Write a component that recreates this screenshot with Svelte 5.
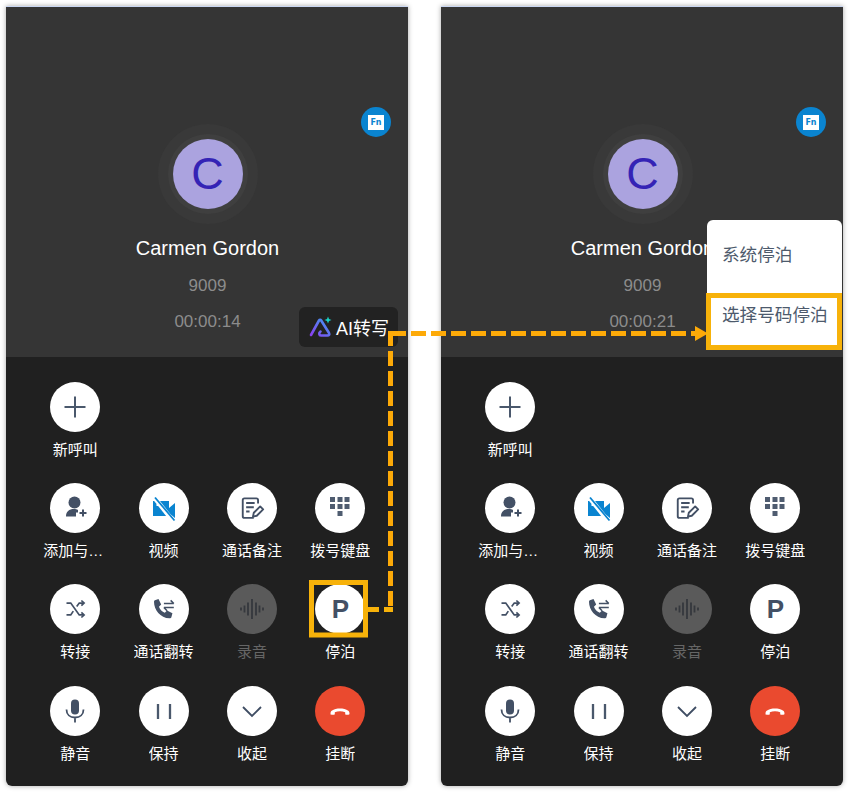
<script>
	// action rows, the same on both phones
	const rows = [
		[{ id: "plus", label: "新呼叫" }],
		[
			{ id: "addUser", label: "添加与通话者" },
			{ id: "video", label: "视频" },
			{ id: "note", label: "通话备注" },
			{ id: "dialpad", label: "拨号键盘" }
		],
		[
			{ id: "shuffle", label: "转接" },
			{ id: "flip", label: "通话翻转" },
			{ id: "wave", label: "录音", off: true },
			{ id: "park", label: "停泊" }
		],
		[
			{ id: "mic", label: "静音" },
			{ id: "pause", label: "保持" },
			{ id: "down", label: "收起" },
			{ id: "hangup", label: "挂断", red: true }
		]
	];

	const phones = [
		{ time: "00:00:14", ai: true, menu: false },
		{ time: "00:00:21", ai: false, menu: true }
	];
</script>

{#snippet icon(id)}
	{#if id === "park"}
		<span class="park">P</span>
	{:else}
		<svg width="32" height="32" viewBox="0 0 32 32" fill="none" stroke="#435065" stroke-width="1.6">
			{#if id === "plus"}
				<path d="M16 5.500v21M5.500 16h21" stroke="#4a586c" stroke-width="2" />
			{:else if id === "addUser"}
				<circle cx="15.500" cy="10.500" r="6" fill="#435065" stroke="none" />
				<path d="M7 24.500c0-5 3-7.500 8-7.500 1.500 0 3 .3 4 .9v2.600h-2v4z" fill="#435065" stroke="none" />
				<path d="M24 17.500v7M20.500 21h7" stroke-width="2" />
			{:else if id === "video"}
				<path d="M5 9h16v7l6-5v15l-6-5v3H5z" fill="#0a84d0" stroke="none" />
				<path d="M5.500 4.500L25 29" stroke="#fff" stroke-width="4.500" />
				<path d="M7 5.500l19.500 23" stroke="#0a84d0" stroke-width="1.800" />
				<rect x="8.500" y="12" width="2" height="2" fill="#fff" stroke="none" />
			{:else if id === "note"}
				<g transform="translate(2.500 2.500) scale(.85)">
					<path d="M23 10.500V6.500a2 2 0 0 0-2-2H7a2 2 0 0 0-2 2v19a2 2 0 0 0 2 2h11" stroke-width="2.200" />
					<path d="M9 10h10M9 15h9M9 20h4" stroke-width="2.200" />
					<path d="M17 26l1-4.500 7.500-7.500 3.500 3.500-7.500 7.500z" stroke-width="2.200" stroke-linejoin="round" />
				</g>
			{:else if id === "dialpad"}
				<g fill="#4f5c70" stroke="none">
					<rect x="6" y="5" width="5" height="5" /><rect x="13.500" y="5" width="5" height="5" /><rect x="20.500" y="5" width="5" height="5" />
					<rect x="6" y="12" width="5" height="5" /><rect x="13.500" y="12" width="5" height="5" /><rect x="20.500" y="12" width="5" height="5" />
					<rect x="13.500" y="19" width="5" height="5" />
				</g>
			{:else if id === "shuffle"}
				<g transform="translate(2.400 2.400) scale(.85)">
					<path d="M6 9h5l10 14h5M6 23h5l3-4.500M18 13l3-4h5" stroke-width="2" />
					<path d="M23.500 6l3.200 3-3.200 3M23.500 20l3.200 3-3.200 3" stroke-width="2" />
				</g>
			{:else if id === "flip"}
				<g transform="translate(1.500 1.500) scale(.9)">
					<path d="M6 6.500l4-1.500 3 6-2.500 2.500c1.200 3 3.500 5.500 6.500 6.800l2.500-2.500 6 3-1.200 4.500c-.3.900-1 1.200-2 1.200C12 26 5 17 5 8c0-.7.300-1.200 1-1.500z" fill="#435065" stroke="none" />
					<path d="M16 10h11M23.500 6.500l3.500 3.500M27 14.500H16M19.500 18l-3.500-3.500" stroke-width="1.700" />
				</g>
			{:else if id === "wave"}
				<path d="M5 14.500v3M8.500 12.500v7M12 9.500v13M16 6v20M20 9.500v13M23.500 12.500v7M27 14.500v3" stroke="#35383d" stroke-width="1.800" />
			{:else if id === "mic"}
				<rect x="12" y="4.500" width="8" height="15" rx="4" fill="#435065" stroke="none" />
				<path d="M7.500 14.500c0 5 3.500 8 8.500 8s8.500-3 8.500-8M16 22.500v5" stroke-width="1.800" />
			{:else if id === "pause"}
				<path d="M10 9v15M22 9v15" stroke="#4a586c" stroke-width="2.300" />
			{:else if id === "down"}
				<path d="M7 12l9 9 9-9" stroke="#3f4d63" stroke-width="1.800" />
			{:else if id === "hangup"}
				<path d="M6.500 18.500c0-1 .3-2 1.200-2.700C10 14 13 13.500 16 13.500s6 .5 8.300 2.300c.9.700 1.200 1.700 1.200 2.700 0 .8-.4 1.200-1 1.200h-2.300c-.6 0-1-.4-1-1v-1.500c-1.700-.7-3.300-1-5.200-1s-3.500.3-5.200 1v1.500c0 .6-.4 1-1 1H7.500c-.6 0-1-.4-1-1.200z" fill="#fff" stroke="none" />
			{/if}
		</svg>
	{/if}
{/snippet}

{#snippet phone(p)}
	<section class="phone">
		<div class="top">
			<span class="fn"><b>Fn</b></span>
			<div class="ring"><div class="avatar">C</div></div>
			<div class="name">Carmen Gordon</div>
			<div class="ext">9009</div>
			<div class="time">{p.time}</div>

			{#if p.ai}
				<div class="ai">
					<svg width="24" height="22" viewBox="0 0 24 22" fill="none">
						<defs>
							<linearGradient id="aigrad" x1="0" y1="1" x2="1" y2="0">
								<stop offset="0" stop-color="#8a3ff0" />
								<stop offset="1" stop-color="#3f9cf2" />
							</linearGradient>
						</defs>
						<path d="M2 19L10 4.500c.6-1 1.600-1 2.200 0L20 17c.8 1.500 0 2.500-1.500 2.500h-6.500c-2 0-2.500-2.500-.5-4" stroke="url(#aigrad)" stroke-width="2.600" stroke-linecap="round" />
						<path d="M19 .5l1 2.500 2.500 1-2.500 1-1 2.500-1-2.500-2.500-1 2.500-1z" fill="#19d3c5" />
					</svg>
					<span>AI转写</span>
				</div>
			{/if}

			{#if p.menu}
				<div class="menu">
					<div class="item">系统停泊</div>
					<div class="item">选择号码停泊</div>
				</div>
			{/if}
		</div>

		<div class="bottom">
			{#each rows as row}
				<div class="row">
					{#each row as a}
						<div class="action" class:off={a.off}>
							<div class="btn" class:red={a.red}>{@render icon(a.id)}</div>
							<div class="label">{a.label}</div>
						</div>
					{/each}
				</div>
			{/each}
		</div>
	</section>
{/snippet}

<main class="page">
	{#each phones as p}
		{@render phone(p)}
	{/each}

	<!-- orange callouts drawn over the two phones -->
	<svg class="callout" width="849" height="793" viewBox="0 0 849 793" fill="none">
		<rect x="311.500" y="582.500" width="54" height="52.500" stroke="#f7b20a" stroke-width="5" />
		<path d="M368 609.500H379M384 609.500H393" stroke="#f7b20a" stroke-width="5" />
		<path d="M390.500 331V607" stroke="#fdaa08" stroke-width="5" stroke-dasharray="15 5" />
		<path d="M391 333.500H697" stroke="#fdaa08" stroke-width="5" stroke-dasharray="15 5" />
		<path d="M695 326L708 333.500L695 341z" fill="#fdaa08" />
		<rect x="708.500" y="295.500" width="131" height="52" stroke="#f7b20a" stroke-width="5" />
	</svg>
</main>

<style>
	:global(body) {
		margin: 0;
		background: #fff;
	}

	.page {
		position: relative;
		width: 849px;
		height: 793px;
		box-sizing: border-box;
		padding: 7px 6px;
		display: flex;
		gap: 33px;
		font-family: "Liberation Sans", "Noto Sans CJK SC", sans-serif;
	}

	.phone {
		width: 402px;
		height: 779px;
		border-radius: 0 0 6px 6px;
		box-shadow: 0 0 5px rgba(0, 0, 0, 0.35);
		border-top: 1px solid #c9d6f2;
		margin-top: -1px;
		display: flex;
		flex-direction: column;
	}

	.top {
		position: relative;
		height: 350px;
		box-sizing: border-box;
		padding: 117px 0 0 1px;
		background: #353535;
		display: flex;
		flex-direction: column;
		align-items: center;
	}

	.fn {
		position: absolute;
		top: 100px;
		right: 17px;
		width: 30px;
		height: 30px;
		border-radius: 50%;
		background: #0a84d0;
		display: flex;
		align-items: center;
		justify-content: center;
	}

	.fn b {
		width: 16px;
		height: 15px;
		background: #fff;
		color: #0a84d0;
		font: bold 8px/15px "DejaVu Sans", sans-serif;
		text-align: center;
	}

	.ring {
		width: 80px;
		height: 80px;
		border-radius: 50%;
		margin: 10px;
		background: #3f3f3f;
		box-shadow: 0 0 0 10px #393939;
		display: flex;
		align-items: center;
		justify-content: center;
	}

	.avatar {
		width: 70px;
		height: 70px;
		border-radius: 50%;
		background: #aba3df;
		color: #3423b5;
		font-size: 45px;
		line-height: 70px;
		text-align: center;
	}

	.name {
		margin-top: 12px;
		color: #fff;
		font-size: 20px;
		line-height: 24px;
	}

	.ext {
		margin-top: 15px;
		color: #8c8c8c;
		font-size: 17px;
		line-height: 22px;
	}

	.time {
		margin-top: 14px;
		color: #8c8c8c;
		font-size: 17px;
		line-height: 22px;
	}

	.ai {
		position: absolute;
		left: 293px;
		top: 300px;
		width: 99px;
		height: 40px;
		box-sizing: border-box;
		padding-left: 10px;
		border-radius: 6px;
		background: #222;
		color: #fff;
		font-size: 18px;
		display: flex;
		align-items: center;
		gap: 3px;
	}

	.menu {
		position: absolute;
		left: 266px;
		top: 213px;
		width: 135px;
		height: 128px;
		box-sizing: border-box;
		padding-top: 5px;
		background: #fff;
		border-radius: 6px 6px 0 0;
	}

	.item {
		height: 60px;
		padding-left: 15px;
		color: #4d5a6c;
		font-size: 17.6px;
		line-height: 60px;
	}

	.bottom {
		flex: 1;
		box-sizing: border-box;
		padding: 25px 23px 0 25px;
		background: #202020;
		border-radius: 0 0 6px 6px;
		display: flex;
		flex-direction: column;
		gap: 23px;
	}

	.row {
		display: grid;
		grid-template-columns: repeat(4, 88.4px);
	}

	.row:last-child {
		margin-top: 1px;
	}

	.action {
		display: flex;
		flex-direction: column;
		align-items: center;
	}

	.btn {
		width: 50px;
		height: 50px;
		border-radius: 50%;
		background: #fff;
		display: flex;
		align-items: center;
		justify-content: center;
	}

	.btn.red {
		background: #ea4a2f;
	}

	.off .btn {
		background: #5a5a5a;
	}

	.label {
		margin-top: 8px;
		max-width: 64px;
		color: #fff;
		font-size: 15px;
		line-height: 20px;
		white-space: nowrap;
		overflow: hidden;
		text-overflow: ellipsis;
	}

	.off .label {
		color: #666;
	}

	.park {
		color: #435065;
		font-size: 26px;
		font-weight: bold;
		line-height: 30px;
	}

	.callout {
		position: absolute;
		left: 0;
		top: 0;
		pointer-events: none;
	}
</style>
